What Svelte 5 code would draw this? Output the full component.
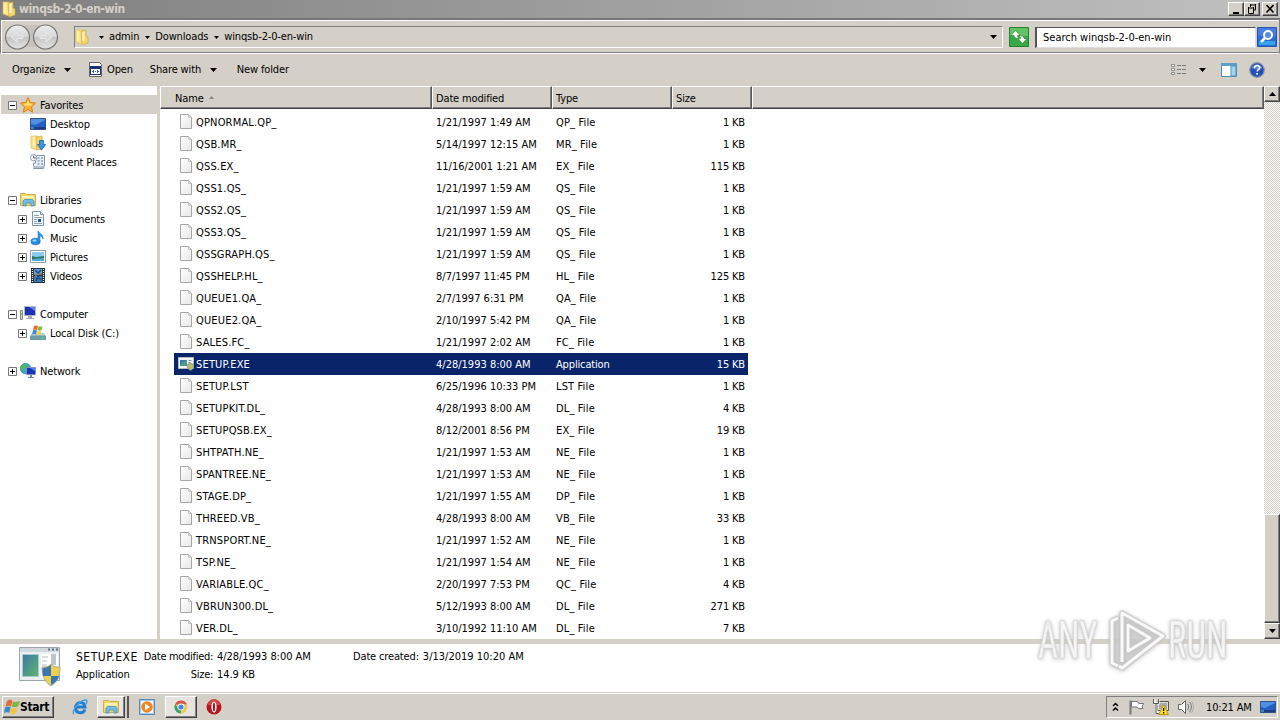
<script>
  const title = 'winqsb-2-0-en-win';
  const crumbs = ['admin', 'Downloads', title];

  const nav = [
    { label: 'Favorites', icon: 'star', level: 0, box: '-', active: true },
    { label: 'Desktop', icon: 'desktop', level: 1 },
    { label: 'Downloads', icon: 'downloads', level: 1 },
    { label: 'Recent Places', icon: 'recent', level: 1 },
    null,
    { label: 'Libraries', icon: 'libraries', level: 0, box: '-' },
    { label: 'Documents', icon: 'document', level: 1, box: '+' },
    { label: 'Music', icon: 'music', level: 1, box: '+' },
    { label: 'Pictures', icon: 'pictures', level: 1, box: '+' },
    { label: 'Videos', icon: 'videos', level: 1, box: '+' },
    null,
    { label: 'Computer', icon: 'computer', level: 0, box: '-' },
    { label: 'Local Disk (C:)', icon: 'disk', level: 1, box: '+' },
    null,
    { label: 'Network', icon: 'network', level: 0, box: '+' }
  ];

  const files = [
    ['QPNORMAL.QP_', '1/21/1997 1:49 AM', 'QP_ File', '1 KB'],
    ['QSB.MR_', '5/14/1997 12:15 AM', 'MR_ File', '1 KB'],
    ['QSS.EX_', '11/16/2001 1:21 AM', 'EX_ File', '115 KB'],
    ['QSS1.QS_', '1/21/1997 1:59 AM', 'QS_ File', '1 KB'],
    ['QSS2.QS_', '1/21/1997 1:59 AM', 'QS_ File', '1 KB'],
    ['QSS3.QS_', '1/21/1997 1:59 AM', 'QS_ File', '1 KB'],
    ['QSSGRAPH.QS_', '1/21/1997 1:59 AM', 'QS_ File', '1 KB'],
    ['QSSHELP.HL_', '8/7/1997 11:45 PM', 'HL_ File', '125 KB'],
    ['QUEUE1.QA_', '2/7/1997 6:31 PM', 'QA_ File', '1 KB'],
    ['QUEUE2.QA_', '2/10/1997 5:42 PM', 'QA_ File', '1 KB'],
    ['SALES.FC_', '1/21/1997 2:02 AM', 'FC_ File', '1 KB'],
    ['SETUP.EXE', '4/28/1993 8:00 AM', 'Application', '15 KB'],
    ['SETUP.LST', '6/25/1996 10:33 PM', 'LST File', '1 KB'],
    ['SETUPKIT.DL_', '4/28/1993 8:00 AM', 'DL_ File', '4 KB'],
    ['SETUPQSB.EX_', '8/12/2001 8:56 PM', 'EX_ File', '19 KB'],
    ['SHTPATH.NE_', '1/21/1997 1:53 AM', 'NE_ File', '1 KB'],
    ['SPANTREE.NE_', '1/21/1997 1:53 AM', 'NE_ File', '1 KB'],
    ['STAGE.DP_', '1/21/1997 1:55 AM', 'DP_ File', '1 KB'],
    ['THREED.VB_', '4/28/1993 8:00 AM', 'VB_ File', '33 KB'],
    ['TRNSPORT.NE_', '1/21/1997 1:52 AM', 'NE_ File', '1 KB'],
    ['TSP.NE_', '1/21/1997 1:54 AM', 'NE_ File', '1 KB'],
    ['VARIABLE.QC_', '2/20/1997 7:53 PM', 'QC_ File', '4 KB'],
    ['VBRUN300.DL_', '5/12/1993 8:00 AM', 'DL_ File', '271 KB'],
    ['VER.DL_', '3/10/1992 11:10 AM', 'DL_ File', '7 KB']
  ];

  let selected = $state('SETUP.EXE');
</script>

{#snippet caret()}
  <svg class="caret" width="7" height="4" viewBox="0 0 7 4"><path d="M0 0h7L3.5 4z" fill="#000" /></svg>
{/snippet}

{#snippet icon(name)}
  <svg class="icon" width="16" height="16" viewBox="0 0 16 16">
    {#if name === 'folder'}
      <path d="M2 1h6v14l-6-2z" fill="#f9e591" stroke="#e0bd55" stroke-width=".7" />
      <path d="M7 2l5-1v6l2 1v6l-6 2z" fill="#f2d56c" stroke="#d0ab48" stroke-width=".7" />
      <path d="M8.500 3l2-.5v9l-2 1z" fill="#fff6bd" />
      <path d="M3 2h2v10l-2-.5z" fill="#fff0a8" />
    {:else if name === 'star'}
      <path d="M8 .6l2.200 4.900 5.300.6-4 3.600 1.200 5.500L8 12.400l-4.700 2.800 1.200-5.500-4-3.600 5.300-.6z" fill="#ffb52c" stroke="#e17a16" />
      <path d="M8 3l1.300 3.400 3.200.4-2.500 2L8 8 5.500 9 3.400 6.800l3.300-.4z" fill="#ffe680" />
    {:else if name === 'desktop'}
      <path d="M.5 2.500h15v11H.5z" fill="#245fc4" stroke="#31518c" />
      <path d="M1 3h14v1L5 9 1 8z" fill="#5090e0" />
      <path d="M1 11h14v2H1z" fill="#1c3d80" /><path d="M1 12h3" stroke="#66c8ff" />
    {:else if name === 'downloads'}
      <path d="M1 1h6v14l-6-2z" fill="#f9e591" stroke="#e0bd55" stroke-width=".7" />
      <path d="M6 2l6-1v13l-5 1z" fill="#f2d56c" stroke="#d0ab48" stroke-width=".7" />
      <path d="M3 2h2v9l-2-.5z" fill="#fff0a8" />
      <path d="M9.500 5.500h4v4h2.200L11.500 15l-4.200-5.500h2.200z" fill="#3b95df" stroke="#1c62b0" stroke-width=".8" />
    {:else if name === 'recent'}
      <path d="M5.500 1.500h9V10l-1 4.500h-10V9h2z" fill="#e8eff5" stroke="#8294a5" />
      <path d="M7.500 4h2m1.500 0h2M7.500 7h2m1.500 0h2M7.500 10h2m1.500 0h2" stroke="#527b9e" />
      <path d="M3 12h10v2H3z" fill="#b2c1ce" />
      <circle cx="3.700" cy="3.700" r="3.200" fill="#f7fbff" stroke="#8ba0b2" /><path d="M3.700 1.700V4H6" fill="none" stroke="#557" />
    {:else if name === 'libraries'}
      <path d="M.5 2.500v-1h5l1 1h9v11H.5z" fill="#f1d76a" stroke="#cfac48" />
      <path d="M2 4h12v3H2z" fill="#fff5b5" /><path d="M1 6h14v3H1z" fill="#f7e48d" />
      <path d="M3 14V9l1.500-1.500h8L14 9v5h-3v-3H6v3z" fill="#73bce4" stroke="#4a91c0" stroke-width=".8" />
    {:else if name === 'document'}
      <path d="M2.500.5h8l3 3v11h-11z" fill="#f5faff" stroke="#7c94ae" />
      <path d="M10.500.5v3h3" fill="#c5daf0" stroke="#7c94ae" />
      <path d="M4 4.500h5M4 6.500h8M4 8.500h3M4 10.500h3M4 12.500h8" stroke="#92a4b8" />
      <path d="M8 8h3v3H8z" fill="#24569b" />
    {:else if name === 'music'}
      <ellipse cx="5.500" cy="11.500" rx="4.500" ry="3.300" fill="#268fe2" stroke="#1763b4" stroke-width=".7" />
      <path d="M8 12V.8c1 3 5.500 3 5 8.200-.7-2-1.700-3-3-3.300V12z" fill="#2f9de8" stroke="#1763b4" stroke-width=".5" />
      <ellipse cx="4.500" cy="10.500" rx="2" ry="1" fill="#a4e1ff" />
    {:else if name === 'pictures'}
      <path d="M.5 1.500h15v12H.5z" fill="#fff" stroke="#8c9aaa" />
      <path d="M2 3h12v9H2z" fill="#8dcced" /><path d="M2 7l4 1 8-1v5H2z" fill="#267b68" />
      <path d="M2 10l12-1v3H2z" fill="#58a9ce" />
    {:else if name === 'videos'}
      <path d="M1 0h14v15H1z" fill="#263140" /><path d="M4 1h8v6H4z" fill="#62a6dc" /><path d="M4 8h8v6H4z" fill="#3c7bb9" />
      <path d="M5 2l3 3 3-3M6 13l2-4 3 3" stroke="#254e80" stroke-width="1.700" fill="none" />
      <path d="M4 6h3v2H5zM9 5h3v2H9z" fill="#96735f" />
      <path d="M2.500 1v14M13.500 1v14" stroke="#fff" stroke-width="1.200" stroke-dasharray="1 1" />
    {:else if name === 'computer'}
      <path d="M.5 4.500h2v9h-2z" fill="#d5ddd6" stroke="#7a9180" /><path d="M1 8h1" stroke="#5fa942" />
      <path d="M4.500.5h11v9h-11z" fill="#1d31b4" stroke="#b1b8c5" />
      <path d="M9 1h6v4z" fill="#667bff" /><path d="M8 10h4v2h2v1H6v-1h2z" fill="#a6adb9" />
    {:else if name === 'disk'}
      <path d="M2 9h12l2 2v4H0v-4z" fill="#6d9ca8" /><path d="M2 8h12l1.500 2.500H.5z" fill="#b7cfda" />
      <path d="M11 13h3" stroke="#73ed58" />
      <path d="M4 1c2-1 3-.5 4 0L7 5c-1-.5-2.500-.5-4 0z" fill="#f06530" />
      <path d="M8.500 1.200c1.500.7 2.500.5 4 0l-1 4c-1.500.6-2.500.6-4 0z" fill="#7fbd36" />
      <path d="M3 5.500c1.500-.6 2.500-.5 4 0l-1 4c-1.300-.6-2.500-.5-4 0z" fill="#348de6" />
      <path d="M7.300 6c1.500.6 2.500.5 4 0l-1 3.600c-1.400.6-2.500.6-4 0z" fill="#ffcd37" />
    {:else if name === 'network'}
      <circle cx="5.500" cy="5.500" r="5.200" fill="#35a6ce" stroke="#28708f" stroke-width=".6" />
      <path d="M2 2c3-2 6 0 4 2s-3 1-2 4c-3 0-4-3-2-6z" fill="#55b94a" />
      <path d="M6.500 4.500h9v7h-9z" fill="#1637b6" stroke="#8293bb" /><path d="M10 5h5v3z" fill="#557dff" />
      <path d="M10 12h2v2h2v1H8v-1h2z" fill="#7685a3" />
    {:else if name === 'file'}
      <defs>
        <linearGradient id="paper" x2="1" y2="1"><stop stop-color="#fff" /><stop offset="1" stop-color="#e8e8e8" /></linearGradient>
      </defs>
      <path d="M2.500.5h8l3 3v11h-11z" fill="url(#paper)" stroke="#a5a5a5" />
      <path d="M10.500.5v3h3z" fill="#e2e2e2" stroke="#b4b4b4" stroke-width=".7" />
    {:else if name === 'app'}
      <path d="M.5 1.500h15v11H.5z" fill="#f3f5f5" stroke="#b3bcc3" />
      <path d="M2 4h7v6H2z" fill="#4d998f" /><path d="M2 4h7L2 8z" fill="#3d79ad" />
      <path d="M10.500 4.500h3M10.500 6.500h2" stroke="#8696a4" />
      <path d="M12 7l4 1.500c0 3-1 5-3.500 6-2.500-1-3.500-3-3.500-6z" fill="#b7ba71" stroke="#688a8a" stroke-width=".6" />
    {:else if name === 'open'}
      <path d="M1.500.5h10l2 2v12h-12z" fill="#fff" stroke="#666" />
      <path d="M2 4h11v9H2z" fill="#1c2f78" /><path d="M3 7h9v5H3z" fill="#fff" />
      <path d="M4 9.500h2m1 0h1m1 0h2M5.500 8v3M9.500 8v3" stroke="#345aad" />
    {/if}
  </svg>
{/snippet}

<div class="window">
  <header class="titlebar">
    {@render icon('folder')}
    <span class="title">{title}</span>
    <div class="controls">
      <button aria-label="Minimize"><svg width="14" height="12"><path d="M4 9h6v2H4z" /></svg></button>
      <button aria-label="Restore"><svg width="14" height="12"><path d="M5 2h6M5.500 1v3M10.500 1v6H9M3 5h6M3.500 4v6.500h5V4" fill="none" stroke="#000" /></svg></button>
      <button class="close" aria-label="Close"><svg width="14" height="12"><path d="M3.500 2l7 7.500M10.500 2l-7 7.500" stroke="#000" stroke-width="1.600" /></svg></button>
    </div>
  </header>

  <div class="addressbar">
    <svg class="arrows" width="56" height="28" viewBox="0 0 56 28">
      <defs>
        <linearGradient id="orb" x2="0" y2="1"><stop stop-color="#eee" /><stop offset=".48" stop-color="#d7d7d7" /><stop offset=".52" stop-color="#c4c4c4" /><stop offset="1" stop-color="#e4e4e4" /></linearGradient>
      </defs>
      <path d="M12 2h32c-5 4-5 18 0 22H12z" fill="#c6c3bf" />
      <circle cx="13.500" cy="14" r="12" fill="url(#orb)" stroke="#777" stroke-width="1.200" />
      <circle cx="41.500" cy="14" r="12" fill="url(#orb)" stroke="#777" stroke-width="1.200" />
      <path d="M19 12.500h-6V9l-6 5 6 5v-3.500h6zM36 12.500h6V9l6 5-6 5v-3.500h-6z" fill="#d8d8d8" stroke="#e9e9e9" />
    </svg>
    <div class="path">
      {@render icon('folder')}
      {#each crumbs as crumb}
        <svg class="crumb-arrow" width="5" height="3" viewBox="0 0 5 3"><path d="M0 0h5L2.500 3z" /></svg>
        <span>{crumb}</span>
      {/each}
      <span class="drop">{@render caret()}</span>
    </div>
    <svg class="refresh" width="20" height="20" viewBox="0 0 20 20">
      <path d="M.5.5h19v19H.5z" fill="#37a947" stroke="#238331" /><path d="M1 1h18v8H1z" fill="#61c366" />
      <path d="M2 8.500l4.500-5 4.500 5H8.500c0 1 .5 2 1.500 3-3 0-5-1-5-3zM18 11.500l-4.500 5-4.500-5h2.500c0-1-.5-2-1.500-3 3 0 5 1 5 3z" fill="#fff" stroke="#238331" stroke-width=".6" />
    </svg>
    <div class="search">Search {title}</div>
    <svg class="search-button" width="20" height="20" viewBox="0 0 20 20">
      <path d="M.5.5h19v19H.5z" fill="#286dd7" stroke="#2857a7" /><path d="M1 1h18v8H1z" fill="#4b7de0" /><path d="M2 14h16v4H2z" fill="#36a2ef" />
      <circle cx="11" cy="8" r="4" fill="#558be9" stroke="#fff" stroke-width="2" /><path d="M8 11l-4 4" stroke="#fff" stroke-width="2.500" />
    </svg>
  </div>

  <div class="toolbar">
    <span class="organize">Organize</span>{@render caret()}
    <span class="open">{@render icon('open')}Open</span>
    <span class="share">Share with</span>{@render caret()}
    <span class="new">New folder</span>
    <div class="tools">
      <svg width="16" height="12" viewBox="0 0 16 12">
        <path d="M.5.500h3v2h-3zM.5 4.500h3v2h-3zM.5 8.500h3v2h-3z" fill="#fff" stroke="#777" stroke-width=".8" />
        <path d="M6 1.500h4m1 0h4M6 5.500h4m1 0h4M6 9.500h4m1 0h4" stroke="#777b83" />
      </svg>
      {@render caret()}
      <svg class="preview" width="16" height="14" viewBox="0 0 16 14">
        <path d="M.5.5h15v13H.5z" fill="#fff" stroke="#4b8bb1" /><path d="M0 0h16v3H0z" fill="#5c9fc4" /><path d="M10 3h5v10h-5z" fill="#a2d5ed" stroke="#5193b6" />
      </svg>
      <svg width="16" height="16" viewBox="0 0 16 16">
        <circle cx="8" cy="8" r="7.300" fill="#2650b5" stroke="#8b94a8" stroke-width="1.200" /><path d="M2.500 6a6 6 0 0 1 11 0C10 8 6 8 2.500 6z" fill="#6187d8" />
        <path d="M5.500 6c0-3.500 5.500-3 5.200 0C10.500 7.500 8.500 7.500 8.200 9.500M8.100 11v1.800" fill="none" stroke="#fff" stroke-width="1.600" />
      </svg>
    </div>
  </div>

  <main>
    <nav>
      {#each nav as item}
        {#if item}
          <div class="nav-item" class:active={item.active} class:child={item.level === 1}>
            <span class="slot">
              {#if item.box}
                <svg width="9" height="9" viewBox="0 0 9 9">
                  <path d="M.5.5h8v8h-8z" fill="#fff" stroke="#777" />
                  <path d={item.box === '+' ? 'M2 4.500h5M4.500 2v5' : 'M2 4.500h5'} stroke="#000" />
                </svg>
              {/if}
            </span>
            {@render icon(item.icon)}
            <span class="nav-label">{item.label}</span>
          </div>
        {:else}
          <div class="nav-gap"></div>
        {/if}
      {/each}
    </nav>

    <section class="list">
      <div class="columns head">
        <div class="name">Name <svg width="5" height="3" viewBox="0 0 5 3"><path d="M0 3h5L2.500 0z" fill="#888" /></svg></div>
        <div>Date modified</div>
        <div>Type</div>
        <div>Size</div>
        <div></div>
      </div>
      <div class="rows">
        {#each files as [name, date, type, size]}
          <!-- svelte-ignore a11y_click_events_have_key_events, a11y_no_static_element_interactions -->
          <div class="row" class:selected={selected === name} onclick={() => (selected = name)}>
            <span class="filename">{@render icon(name === 'SETUP.EXE' ? 'app' : 'file')}{name}</span>
            <span class="date">{date}</span>
            <span class:short={type.endsWith('File')}>{type}</span>
            <span class="size">{size}</span>
          </div>
        {/each}
      </div>
    </section>

    <div class="scrollbar">
      <button aria-label="Scroll up"><svg width="7" height="4"><path d="M0 4h7L3.500 0z" /></svg></button>
      <div class="track"></div>
      <div class="thumb"></div>
      <button aria-label="Scroll down">{@render caret()}</button>
    </div>
  </main>

  <footer class="details">
    <svg class="big-icon" width="44" height="42" viewBox="0 0 44 42">
      <defs><linearGradient id="screen" x2="1" y2="1"><stop stop-color="#3b78a9" /><stop offset="1" stop-color="#60b56b" /></linearGradient></defs>
      <path d="M1.500 1.500h40v33h-40z" fill="#edf0f2" stroke="#9ba5ac" />
      <path d="M2 2h39v4H2z" fill="#d0d8df" /><path d="M30 3.500h2m2 0h2m2 0h2" stroke="#5e7182" stroke-width="2" />
      <path d="M4.500 8.500h16v22h-16z" fill="url(#screen)" stroke="#a9cac8" />
      <path d="M23 8h17v24H23z" fill="#fff" /><path d="M24 11h6M24 15h5M24 19h5M24 23h4" stroke="#b5bac0" /><path d="M33 8h5v11h-5z" fill="#bdc6cd" />
      <path d="M33 18c3 3 5 3 9 3 0 10-3 15-9 19-6-4-9-9-9-19 4 0 6 0 9-3z" fill="#edd14d" stroke="#a5acaa" />
      <path d="M33 19v11h-8c-.5-3-.5-5-.5-8 3 0 6-1 8.500-3zM33 30h8c-1 4-4 7-8 9z" fill="#3975b1" />
    </svg>
    <div class="filetype"><div class="large">SETUP.EXE</div><div>Application</div></div>
    <div class="meta"><span>Date modified:</span><span>4/28/1993 8:00 AM</span><span>Size:</span><span>14.9 KB</span></div>
    <div class="created">Date created: <span>3/13/2019 10:20 AM</span></div>
  </footer>

  <div class="taskbar">
    <button class="start">
      <svg width="16" height="16" viewBox="0 0 16 16">
        <path d="M3 2c2-2 4-1.500 5.500 0L7 7.500c-1.500-1-3.500-1-5.500 0z" fill="#e66a3a" /><path d="M9 2.500c2 1 4 .7 7-.5l-2 5.500c-2 1-4 1-6.300 0z" fill="#7db743" />
        <path d="M1.200 8.300c2-1 3.500-1 5.500 0l-1.500 5.500C3.500 13 2 13 0 14z" fill="#3c87cf" /><path d="M7.300 8.800c2 1 4 .8 6.200-.3l-1.500 5.500c-2 1.500-4 1.500-6.300 0z" fill="#f2c33f" />
      </svg>
      Start
    </button>
    <svg class="ie" width="16" height="16" viewBox="0 0 16 16">
      <path d="M13 10.500c-2 5-10 4-9.500-2C4 2 13 2 13 8H5" fill="none" stroke="#1f7fd0" stroke-width="3" />
      <path d="M2 15C-1.500 13 8 0 14 1c2 1 0 4-1 5" fill="none" stroke="#4a9de0" stroke-width="1.500" />
    </svg>
    <div class="explorer"><div class="task">{@render icon('libraries')}</div></div>
    <svg class="wmp" width="16" height="16" viewBox="0 0 16 16">
      <path d="M.5.5h15v15H.5z" fill="#a9cbe7" stroke="#5489b9" /><path d="M2 2h12v12H2z" fill="#f5faff" />
      <circle cx="8" cy="8" r="5.800" fill="#f0871e" /><path d="M6 4.500l5 3.500-5 3.500z" fill="#fff" />
    </svg>
    <div class="task chrome">
      <svg width="16" height="16" viewBox="0 0 16 16">
        <circle cx="8" cy="8" r="6.500" fill="#efc94c" /><path d="M8 8L2.400 4.700a6.500 6.500 0 0 1 11.500.6H8z" fill="#d6564b" /><path d="M8 8v6.500A6.500 6.500 0 0 1 2.400 4.700L5 9.500z" fill="#3da266" />
        <circle cx="8" cy="8" r="3.400" fill="#fff" /><circle cx="8" cy="8" r="2.600" fill="#4385e8" />
      </svg>
    </div>
    <svg class="opera" width="16" height="16" viewBox="0 0 16 16"><circle cx="8" cy="8" r="7.500" fill="#b51620" /><path d="M2 6a6 6 0 0 1 12 0z" fill="#d54545" /><ellipse cx="8" cy="8" rx="2.600" ry="5.500" fill="#fff" /><ellipse cx="8" cy="8" rx="1.100" ry="4.500" fill="#a11920" /></svg>
    <div class="tray">
      <svg width="7" height="10" viewBox="0 0 7 10"><path d="M1 4l2.500-2.500L6 4M1 8.500L3.500 6 6 8.500" fill="none" stroke="#000" stroke-width="1.500" /></svg>
      <svg class="flag" width="16" height="16" viewBox="0 0 16 16"><path d="M1.500 1.500v14" stroke="#777" stroke-width="2" /><path d="M2.500 2.500h6l1 2h5l-1.500 3 1 2h-5l-1-1.500H2.500z" fill="#fff" stroke="#777" /></svg>
      <svg class="net" width="16" height="16" viewBox="0 0 16 16">
        <path d="M4.500 2.500h11v9h-11z" fill="#ddd" stroke="#555" /><path d="M6 4h8v6H6z" fill="#aaa" /><path d="M1.500.5v4h4v-4M3.500 4v9.500H8" fill="none" stroke="#fff" stroke-width="2" /><path d="M.5 0v4.500h5V0M3 5v9.500h5" fill="none" stroke="#555" />
        <path d="M10.500 6l5 9.500H5.800z" fill="#ffe12d" stroke="#b99b00" /><path d="M10.600 9v3M10.600 13v1.500" stroke="#000" stroke-width="1.300" />
      </svg>
      <svg class="sound" width="17" height="16" viewBox="0 0 17 16"><path d="M1.500 5.500h3l4-4v13l-4-4h-3z" fill="#fff" stroke="#666" /><path d="M10.500 5c1.500 2 1.500 4 0 6M12.500 3c2.500 3 2.500 7 0 10" fill="none" stroke="#777" /><path d="M14.500 2c2.500 4 2.500 8 0 12" fill="none" stroke="#999" stroke-width=".7" /></svg>
      <span class="clock">10:21 AM</span>
      {@render icon('desktop')}
    </div>
  </div>

  <div class="watermark">
    <span>ANY</span>
    <svg width="66" height="66" viewBox="0 0 66 66">
      <g fill="none" stroke-linejoin="round">
        <path d="M18 7L9 11v45l9 4M18 3v58l43-32z" fill="#ccc" fill-opacity=".35" />
        <path d="M16 10l-6 3v42l6 3M20 54V5l41 23-41 32-3-2M26 43V17l22 13z" stroke="#ccc" stroke-opacity=".6" stroke-width="5" />
        <path d="M16 10l-6 3v42l6 3M20 54V5l41 23-41 32-3-2M26 43V17l22 13z" stroke="#fff" stroke-opacity=".9" stroke-width="3" />
      </g>
    </svg>
    <span>RUN</span>
  </div>
</div>

<style>
  :global(body) {
    overflow: hidden;
  }

  .window {
    position: relative;
    width: 1280px;
    height: 720px;
    display: flex;
    flex-direction: column;
    background: #d4d0c8;
    color: #000;
    font-family: Tahoma, "DejaVu Sans Condensed", "DejaVu Sans", sans-serif;
    font-stretch: condensed;
    font-size: 11px;
    letter-spacing: -0.15px;
    line-height: 16px;
    white-space: nowrap;
    cursor: default;
  }

  svg {
    display: block;
    flex: none;
  }

  button {
    padding: 0;
    border: 1px solid;
    border-color: #fff #404040 #404040 #fff;
    box-shadow: inset -1px -1px #808080;
    background: #d4d0c8;
    border-radius: 0;
    font: inherit;
    letter-spacing: inherit;
    display: flex;
    align-items: center;
  }

  .titlebar {
    height: 18px;
    flex: none;
    display: flex;
    align-items: center;
    padding: 0 2px 0 1px;
    background: linear-gradient(90deg, #808080, #c0c0c0);
    color: #d4d0c8;
  }

  .title {
    margin-left: 2px;
    font-size: 12px;
    font-weight: bold;
    letter-spacing: -0.4px;
  }

  .controls {
    margin-left: auto;
    display: flex;
  }

  .controls button {
    width: 16px;
    height: 14px;
  }

  .controls .close {
    margin-left: 2px;
  }

  .addressbar {
    height: 36px;
    flex: none;
    box-sizing: border-box;
    display: flex;
    align-items: center;
    padding: 1px 1px 0 3px;
    border: 1px solid #808080;
    border-top: 2px solid #777;
    border-bottom-color: #fff;
    box-shadow: inset 1px 1px #fff, inset 0 -1px #808080;
  }

  .arrows {
    margin-top: -1px;
  }

  .path {
    box-sizing: border-box;
    width: 929px;
    height: 22px;
    margin-left: 14px;
    display: flex;
    align-items: center;
    border: 1px solid;
    border-color: #808080 #fff #fff #808080;
  }

  .path > .icon {
    margin-left: -1px;
  }

  .crumb-arrow {
    margin: 0 5px 0 6px;
  }

  .path > .icon + .crumb-arrow {
    margin-left: 9px;
  }

  .drop {
    margin: 0 5px 0 auto;
  }

  .refresh {
    margin-left: 6px;
  }

  .search {
    box-sizing: border-box;
    width: 221px;
    height: 21px;
    margin: 0 1px 0 6px;
    padding: 2px 6px;
    background: #fff;
    border: 1px solid;
    border-left-width: 2px;
    border-color: #555 #ddd #ddd #555;
    letter-spacing: 0;
  }

  .toolbar {
    height: 32px;
    flex: none;
    display: flex;
    align-items: center;
    padding: 0 15px 0 12px;
  }

  .organize {
    width: 52px;
  }

  .open {
    display: flex;
    align-items: center;
    gap: 3px;
    margin: 0 17px 0 17px;
  }

  .share {
    width: 60px;
  }

  .new {
    margin-left: 20px;
  }

  .tools {
    display: flex;
    align-items: center;
    gap: 12px;
    margin-left: auto;
  }

  .preview {
    margin-left: 3px;
  }

  main {
    height: 553px;
    flex: none;
    display: flex;
  }

  nav {
    box-sizing: border-box;
    width: 157px;
    padding-top: 9px;
    background: #fff;
    margin-right: 3px;
  }

  .nav-item {
    height: 19px;
    display: flex;
    align-items: center;
    padding-left: 8px;
  }

  .nav-item.active {
    background: #d4d0c8;
    margin-left: 1px;
    margin-right: -3px;
    padding-left: 7px;
  }

  .nav-item.child {
    padding-left: 18px;
  }

  .slot {
    width: 12px;
    padding-top: 1px;
  }

  .nav-label {
    margin-left: 4px;
    padding-top: 2px;
  }

  .nav-gap {
    height: 19px;
  }

  .list {
    width: 1104px;
    background: #fff;
  }

  .columns {
    display: grid;
    grid-template-columns: 272px 120px 120px 80px 1fr;
  }

  .head {
    height: 23px;
  }

  .head > div {
    box-sizing: border-box;
    padding: 4px 3px 0;
    background: #d4d0c8;
    border: 1px solid;
    border-color: #fff #555 #404040 #fff;
    box-shadow: inset -1px -1px #808080;
  }

  .head .name {
    display: flex;
    gap: 5px;
    padding-left: 14px;
  }

  .head .name svg {
    margin-top: 5px;
  }

  .rows {
    padding: 2px 0 0 14px;
  }

  .row {
    display: grid;
    grid-template-columns: 262px 120px 120px 69px;
    align-items: center;
    width: 574px;
    height: 22px;
    line-height: 20px;
  }

  .row > span {
    padding-top: 2px;
  }

  .row.selected {
    background: #0a246a;
    color: #fff;
  }

  .row > .filename {
    display: flex;
    align-items: center;
    gap: 2px;
    padding-left: 4px;
    letter-spacing: 0.17px;
  }

  .filename .icon {
    margin-top: -3px;
  }

  .date {
    letter-spacing: 0;
  }

  .short {
    letter-spacing: 0.15px;
  }

  .size {
    text-align: right;
  }

  .scrollbar {
    width: 16px;
    display: flex;
    flex-direction: column;
  }

  .scrollbar button {
    width: 16px;
    height: 16px;
    flex: none;
    justify-content: center;
  }

  .track {
    flex: 1;
    background: repeating-conic-gradient(#fff 0 25%, #d4d0c8 0 50%) 0 0 / 2px 2px;
  }

  .thumb {
    box-sizing: border-box;
    height: 109px;
    background: #d4d0c8;
    border: 1px solid;
    border-color: #fff #404040 #404040 #fff;
    box-shadow: inset -1px -1px #808080;
  }

  .details {
    height: 48px;
    flex: none;
    display: flex;
    margin-top: 5px;
    background: #fff;
    line-height: 18px;
  }

  .big-icon {
    margin: 2px 0 0 18px;
  }

  .filetype {
    margin: 4px 0 0 14px;
    width: 67px;
  }

  .large {
    font-size: 12px;
    letter-spacing: 0.5px;
  }

  .meta {
    display: grid;
    grid-template-columns: 70px 130px;
    column-gap: 4px;
    align-content: start;
    margin-top: 4px;
    letter-spacing: -0.05px;
  }

  .meta span:nth-child(odd) {
    text-align: right;
    letter-spacing: -0.3px;
  }

  .created {
    margin: 4px 0 0 6px;
  }

  .created span {
    margin-left: 1px;
    letter-spacing: 0;
  }

  .taskbar {
    height: 28px;
    flex: none;
    box-sizing: border-box;
    display: flex;
    align-items: center;
    padding: 2px 2px 1px;
    border-top: 1px solid #d4d0c8;
    box-shadow: inset 0 1px #fff;
  }

  .start {
    width: 52px;
    height: 22px;
    gap: 0;
    padding-left: 1px;
    font-weight: bold;
    font-size: 12px;
    letter-spacing: -0.3px;
  }

  .ie {
    margin-left: 18px;
  }

  .task {
    box-sizing: border-box;
    width: 28px;
    height: 22px;
    display: flex;
    align-items: center;
    justify-content: center;
    background: #e7e4df;
    border: 1px solid;
    border-color: #fff #404040 #404040 #fff;
    box-shadow: inset -1px -1px #808080;
  }

  .explorer {
    margin-left: 9px;
    padding-right: 2px;
    border-right: 2px solid #555;
  }

  .wmp {
    margin-left: 10px;
  }

  .chrome {
    width: 32px;
    margin-left: 10px;
  }

  .opera {
    margin-left: 9px;
  }

  .tray {
    box-sizing: border-box;
    width: 172px;
    height: 22px;
    margin-left: auto;
    display: flex;
    align-items: center;
    padding-left: 5px;
    border: 1px solid;
    border-color: #808080 #fff #fff #808080;
  }

  .flag {
    margin-left: 10px;
  }

  .net {
    margin-left: 8px;
  }

  .sound {
    margin-left: 8px;
  }

  .clock {
    width: 47px;
    margin: 0 7px 0 12px;
    padding-top: 1px;
  }

  /* Overlay in the lower right corner */
  .watermark {
    position: absolute;
    left: 1038px;
    top: 608px;
    display: flex;
    align-items: center;
    gap: 0;
    font-family: Roboto, "Liberation Sans", sans-serif;
    font-size: 52px;
    line-height: 66px;
    letter-spacing: 0;
    color: rgba(255, 255, 255, 0.85);
    -webkit-text-stroke: 1px rgba(225, 225, 225, 0.7);
    filter: drop-shadow(0 0 1px #bbb) drop-shadow(0 1px 2px #ccc);
    pointer-events: none;
  }

  .watermark span {
    width: 64px;
    transform: scaleX(0.67);
    transform-origin: left;
  }
</style>
